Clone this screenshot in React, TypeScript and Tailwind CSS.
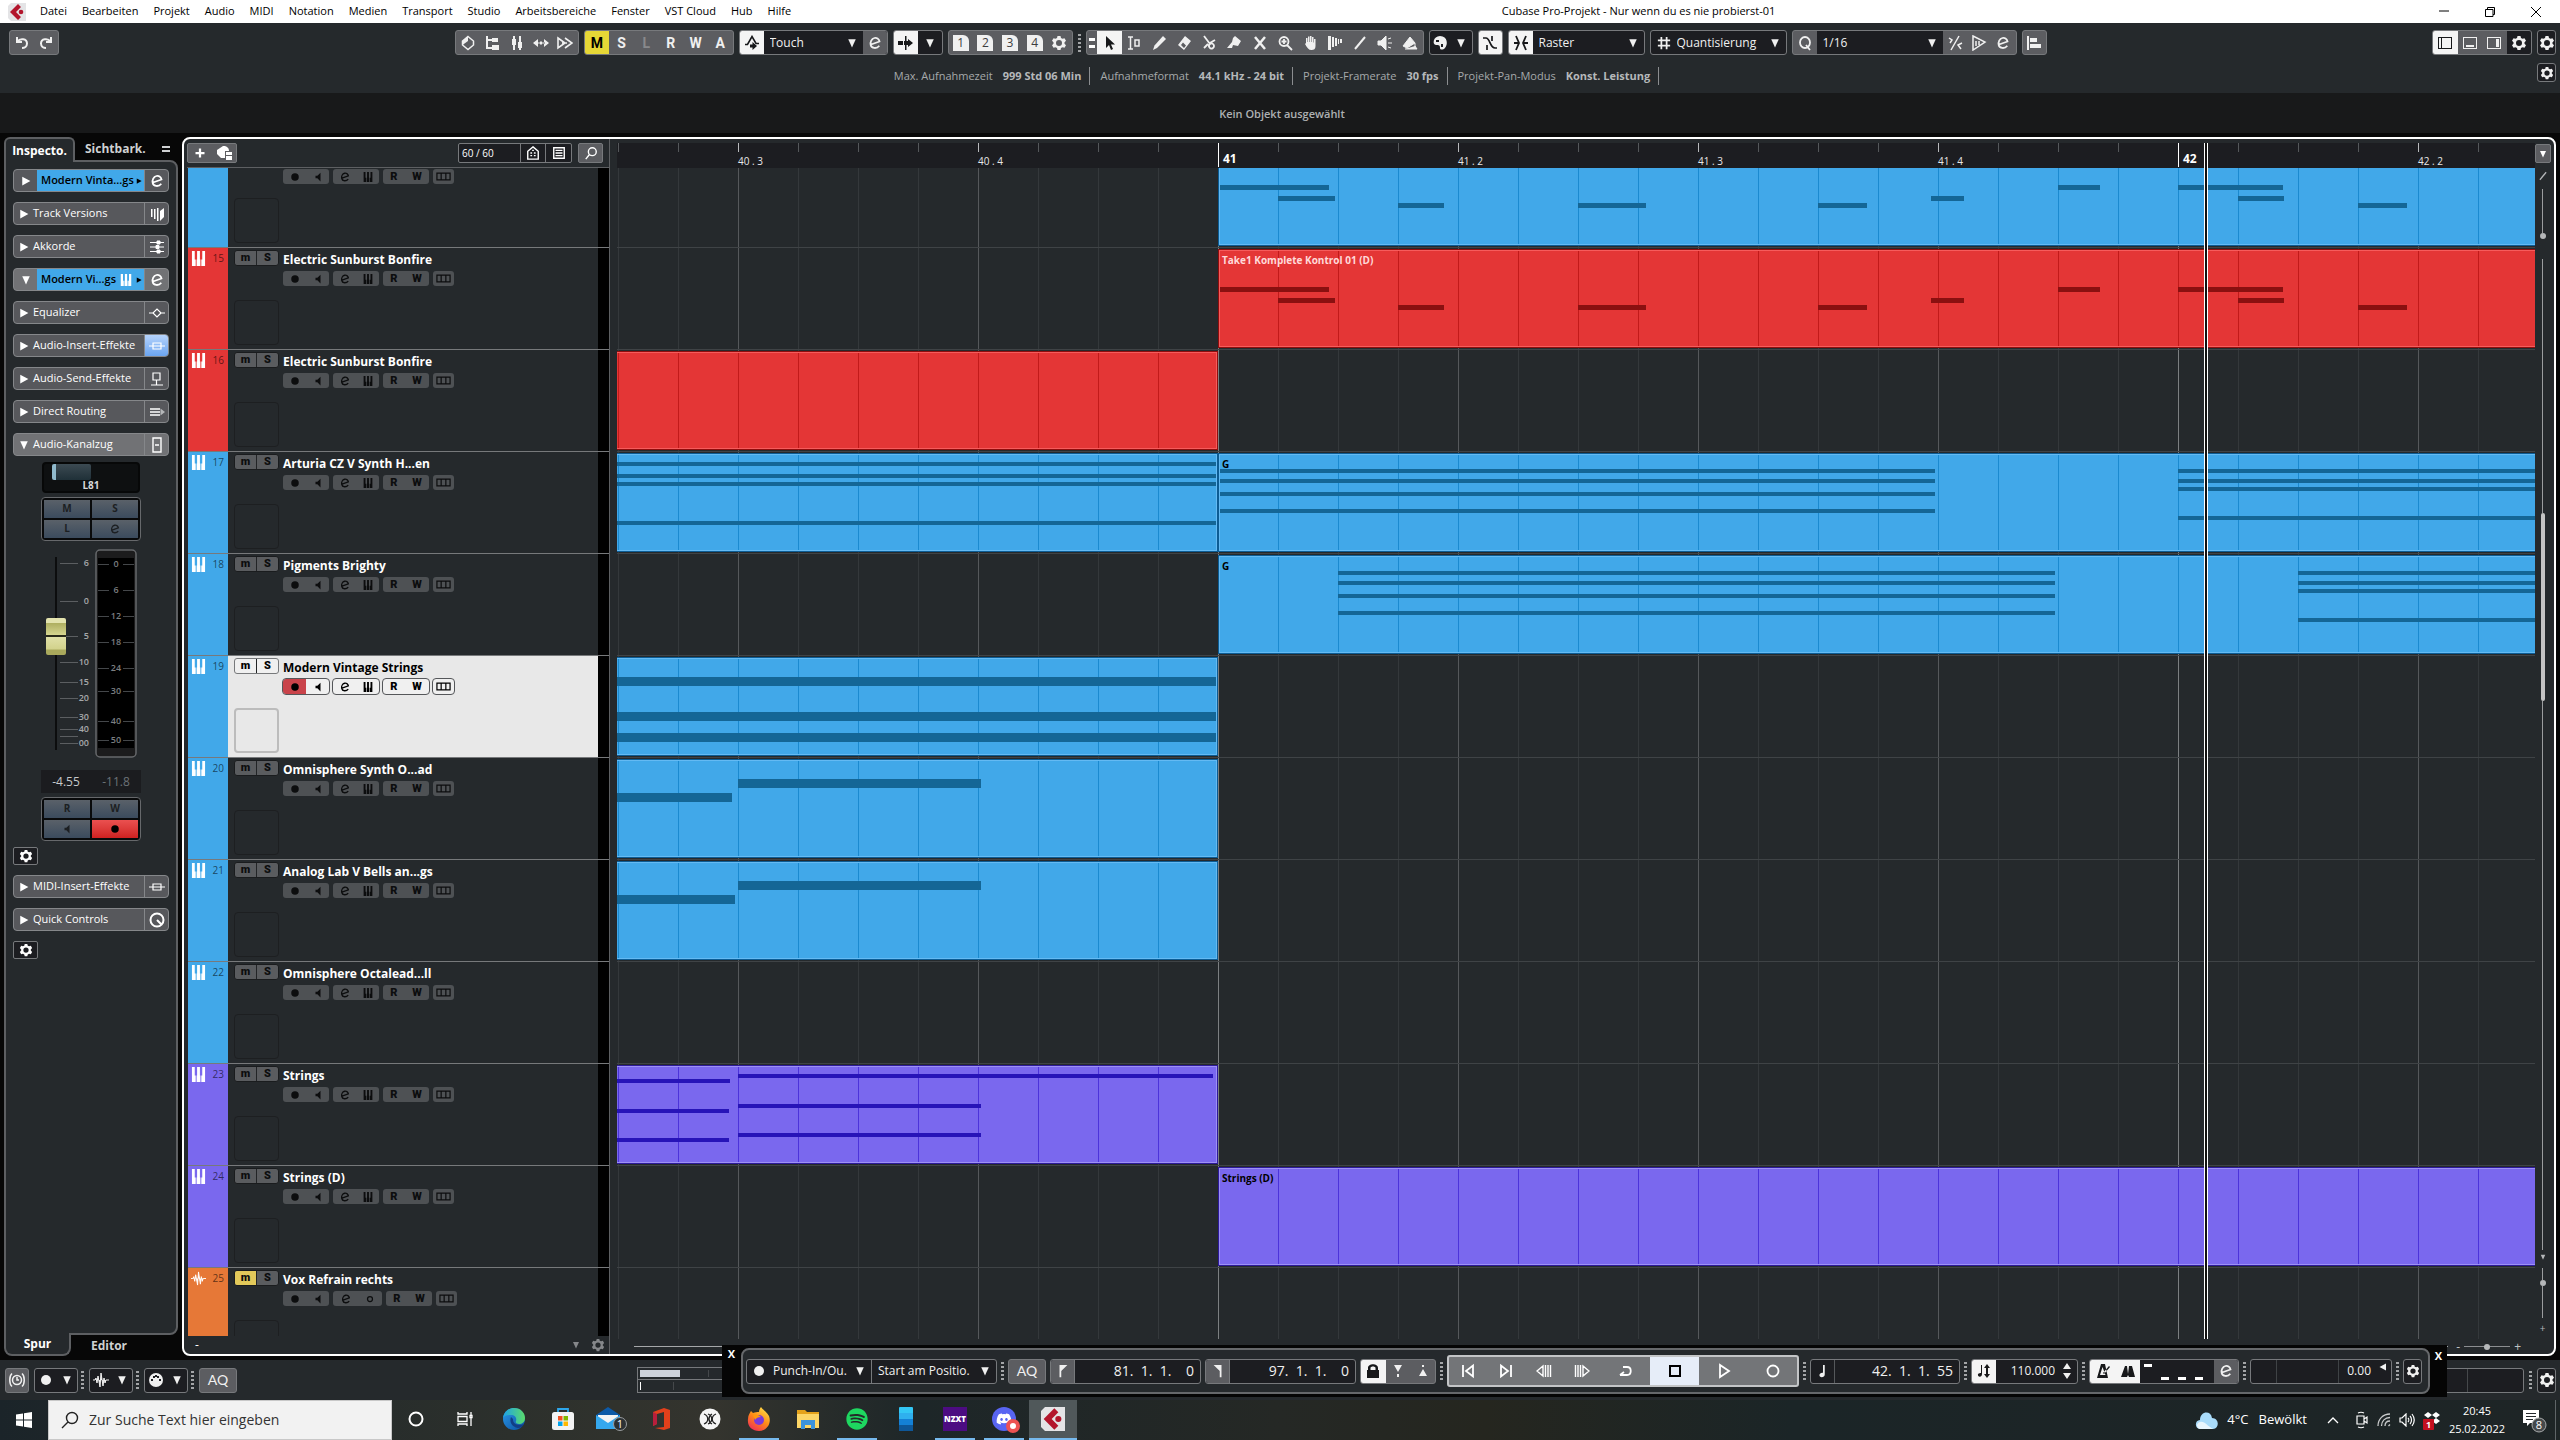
import { useState } from "react";
import type { ReactNode } from "react";
import { FaSpotify, FaDiscord } from "react-icons/fa";
import { clsx } from "clsx";

const icons: Record<string, ReactNode> = {
  undo: <path d="M3 2v5h5M3.500 6.500C6 3 13 3.500 13 8.500c0 3-2.500 4.500-5 4.500" fill="none" stroke="currentColor" strokeWidth="2" />,
  redo: <path d="M13 2v5H8M12.500 6.500C10 3 3 3.500 3 8.500c0 3 2.500 4.500 5 4.500" fill="none" stroke="currentColor" strokeWidth="2" />,
  diamond: (
    <>
      <path d="M8 1.500 13.500 6v4L8 14.500 2.500 10V6Z" fill="none" stroke="currentColor" strokeWidth="1.500" />
      <path d="M8 1.500 2.500 6v4L8 6Z" fill="currentColor" />
    </>
  ),
  tree: <path d="M2 1h2v3h4V3h6v4H8V6H4v6h4v-2h7v5H8v-1H2Z" fill="currentColor" />,
  mixer: <path d="M4 1h2v3h1v6H6v5H4v-5H3V4h1Zm6 0h2v6h1v6h-1v2h-2v-2H9V7h1Z" fill="currentColor" />,
  spread: <path d="M5 4v8L0 8Zm6 0v8l5-4ZM7 6.500h2v3H7ZM4 7.500h8v1H4Z" fill="currentColor" />,
  ff: <path d="M1 3l7 5-7 5ZM8 3l7 5-7 5M10 8H5" fill="none" stroke="currentColor" strokeWidth="1.600" />,
  auto: (
    <>
      <path d="M1 9.500h2.500L8 1.500l4 7h3" fill="none" stroke="currentColor" strokeWidth="1.600" />
      <path d="M6 9.500h2.500V7l4.500 4-4.500 4v-2.500H6Z" fill="currentColor" />
    </>
  ),
  e: <path d="M4 9.500 12.500 6.500C12 3.500 9.500 2.500 7.500 3 4.500 3.700 3 7 3.700 10c.8 3.600 6 4 8.600.8" fill="none" stroke="currentColor" strokeWidth="1.800" />,
  follow: <path d="M7 1h1.500v14H7ZM0 6h5v4H0Zm10 0V4l5 4-5 4v-2H6V6Z" fill="currentColor" />,
  gear: (
    <path
      fillRule="evenodd"
      d="M6.500 1h3l.5 2 1.500.8 2-.6L15 5.800l-1.500 1.500v1.400L15 10.200l-1.500 2.600-2-.6-1.500.8-.5 2h-3l-.5-2-1.500-.8-2 .6L1 10.200l1.500-1.500V7.300L1 5.800l1.500-2.600 2 .6L6 3ZM8 5a3 3 0 100 6 3 3 0 000-6Z"
      fill="currentColor"
    />
  ),
  arrow: <path d="M5 1v12l3-3 2 5 2-1-2-4.500h4Z" fill="currentColor" />,
  range: <path d="M2 2h5M2 14h5M4.500 2v12M9 5h4v6H9Z" stroke="currentColor" strokeWidth="1.500" fill="none" />,
  pen: <path d="M12 1l3 3-9 9-4 2 1.500-4.500Z" fill="currentColor" />,
  eraser: <path fillRule="evenodd" d="M9 1l6 5-7 9-6-5Zm-4 9 3 3 2-2.500-3-3Z" fill="currentColor" />,
  scissors: <path d="M3 1l6 8M14 5 8 8.500M9 9a2.200 2.200 0 103 4 2.200 2.200 0 00-3-4ZM7 9l-4 4" fill="none" stroke="currentColor" strokeWidth="1.800" />,
  glue: <path d="M9 1l6 5-3 5-5-1-1 3H1l5-6 1-4Z" fill="currentColor" />,
  x: <path d="M3 2l10 12M13 2 3 14" stroke="currentColor" strokeWidth="2.500" fill="none" />,
  zoom: <path d="M7 2a4.500 4.500 0 100 9 4.500 4.500 0 000-9ZM10 10l5 5M4.500 6.500h5M7 4v5" fill="none" stroke="currentColor" strokeWidth="1.800" />,
  hand: <path d="M4 3h1.500v4H6V1.500h1.500V7H8V1h1.500v6h.5V2h1.500v5.500h.5V4h1.500v7c0 3-1.500 4-4 4-3 0-4-2-6.500-6l1-1L4 9.500Z" fill="currentColor" />,
  comp: <path d="M1 1h3v14H1ZM5 2h2v10H5ZM8 3h2v8H8Zm3 1h1v5h-1Zm2 0h2v4h-2Z" fill="currentColor" />,
  line: <path d="M3 14 13 2" stroke="currentColor" strokeWidth="2" fill="none" />,
  speaker: <path d="M1 6h3l5-5v14l-5-5H1ZM11 4l3-1M11 8h4M11 12l3 1" fill="currentColor" stroke="currentColor" />,
  bucket: <path d="M1 11 8 2l5 6-8 5Zm12-3v5M3 14h12l-2-3" fill="currentColor" stroke="currentColor" />,
  palette: <path fillRule="evenodd" d="M8 1c8 0 8 9 5 12-2 2-5 2-5 0 0-3-1-3-4-3-4 0-3-9 4-9ZM4 5v2h3V5Zm5 4v3h2V9Z" fill="currentColor" />,
  curve: <path d="M1 3h3c4 0 4 10 9 10h2M10 1v5M5 10v5" fill="none" stroke="currentColor" strokeWidth="1.700" />,
  snap: <path d="M3 1l3 7-3 7M13 1l-3 7 3 7M1 8h5M10 8h5" fill="none" stroke="currentColor" strokeWidth="1.800" />,
  hash: <path d="M5 1v14M11 1v14M1 5h14M1 11h14" fill="none" stroke="currentColor" strokeWidth="2" />,
  q: <path d="M8 2a5 5.500 0 100 11A5 5.500 0 008 2ZM9 10l4 5" fill="none" stroke="currentColor" strokeWidth="1.800" />,
  percent: <path d="M12 1 4 15M2 3l3 2-2 3M15 8l-4 2 3 4" fill="none" stroke="currentColor" strokeWidth="1.500" />,
  flag: <path d="M2 1l12 6-12 8Z M5 6v5M8 6v4" fill="none" stroke="currentColor" strokeWidth="1.500" />,
  align: <path d="M1 1h2v14H1ZM4 3h7v4H4Zm0 6h11v4H4Z" fill="currentColor" />,
  zoneL: <path fillRule="evenodd" d="M1 2h14v12H1Zm1 1v10h2V3Zm3 0v10h9V3Z" fill="currentColor" />,
  zoneB: <path fillRule="evenodd" d="M1 2h14v12H1Zm1 1v10h12V3Zm2 7h8v2H4Z" fill="currentColor" />,
  zoneR: <path fillRule="evenodd" d="M1 2h14v12H1Zm1 1v10h12V3Zm8 1h3v8h-3Z" fill="currentColor" />,
  versions: <path d="M2 3h1.500v8H2Zm3 0h1.500v10H5Zm3-1h1.500v13H8Zm3 3 4-3v9l-4 4Z" fill="currentColor" />,
  chords: <path d="M1 3.500h14M1 8h14M1 12.500h14M8 2h3v3H8ZM7 6.500h3v3H7Zm1 4.500h3v3H8Z" fill="currentColor" stroke="currentColor" />,
  eq: <path d="M0 8h4l4-4 4 4h4M4 8l4 4 4-4" fill="none" stroke="currentColor" strokeWidth="1.200" />,
  insert: <path d="M0 8h16M4 5h8v6H4Z" fill="none" stroke="currentColor" strokeWidth="1.200" />,
  send: <path d="M4 2h7v7H4ZM7.500 9v5M2 14h12" fill="none" stroke="currentColor" strokeWidth="1.200" />,
  routing: (
    <>
      <path d="M1 5h10M1 8h10M1 11h10" fill="none" stroke="currentColor" strokeWidth="1.400" />
      <path d="M11.500 4.500 16 8l-4.500 3.500Z" fill="#b5b7b9" />
    </>
  ),
  strip: <path d="M4 1h8v14H4ZM6 8h4" fill="none" stroke="currentColor" strokeWidth="1.400" />,
  knob: <path d="M8 1.500a6.500 6.500 0 100 13 6.500 6.500 0 000-13ZM8 8l4 4" fill="none" stroke="currentColor" strokeWidth="2" />,
  keys: <path fillRule="evenodd" d="M1 0h14v16H1ZM4 0v9h2.500V0Zm5.500 0v9H12V0ZM5 9v7h1V9Zm5 0v7h1V9Z" fill="currentColor" />,
  wave: <path d="M0 8h2l1-2 1 5 1-7 2 11 1-14 2 13 1-8 1 5 1-3h3" fill="currentColor" stroke="currentColor" />,
  dot: <circle cx="8" cy="8" r="5" fill="currentColor" />,
  ring: <circle cx="8" cy="8" r="4" fill="none" stroke="currentColor" strokeWidth="2" />,
  mon: <path d="M4 6h3l5-5v14L7 10H4Z" fill="currentColor" />,
  lanes: <path d="M1 4.500h14v7H1ZM5.500 4.500v7M10.500 4.500v7" fill="none" stroke="currentColor" strokeWidth="1.300" />,
  plus: <path d="M8 2v12M2 8h12" stroke="currentColor" strokeWidth="3" fill="none" />,
  preset: <path d="M7 1c4 0 6 2 6 5H9v7H5L1 9V5ZM10 7h6v3h-6Zm0 4h6v4h-6Z" fill="currentColor" />,
  agents: <path d="M8 1l6 5v9H2V6ZM5 8h2M9 8h2M5 11h2M9 11h2M7 5h2" fill="none" stroke="currentColor" strokeWidth="1.600" />,
  list: <path d="M2 2h12v12H2ZM4 5h8M4 8h8M4 11h8" fill="none" stroke="currentColor" strokeWidth="1.600" />,
  find: <path d="M9.500 2a4.500 4.500 0 100 9 4.500 4.500 0 000-9ZM6 10l-4 5" fill="none" stroke="currentColor" strokeWidth="1.600" />,
  lock: <path fillRule="evenodd" d="M3 7V5c0-5 10-5 10 0v2h1v8H2V7Zm2.500 0h5V5c0-2-5-2-5 0Z" fill="currentColor" />,
  punchIn: <path d="M4 2h8L8 9ZM7 11h2v3H7Z" fill="currentColor" />,
  punchOut: <path d="M4 13h8L8 6ZM7 2h2v2H7Z" fill="currentColor" />,
  locL: <path d="M4 1h9L6 8v7H4Z" fill="currentColor" />,
  locR: <path d="M12 1H3l7 7v7h2Z" fill="currentColor" />,
  toStart: <path d="M3 2v12M13 2.500v11L6 8Z" fill="none" stroke="currentColor" strokeWidth="1.800" />,
  toEnd: <path d="M13 2v12M3 2.500v11L10 8Z" fill="none" stroke="currentColor" strokeWidth="1.800" />,
  rewind: <path d="M7 3v10L1 8ZM9.500 2v12M12 2v12M14.500 2v12" fill="none" stroke="currentColor" strokeWidth="1.400" />,
  forward: <path d="M9 3v10l6-5ZM6.500 2v12M4 2v12M1.500 2v12" fill="none" stroke="currentColor" strokeWidth="1.400" />,
  cycle: <path d="M5 4h4c5 0 5 8 0 8H2M6 9l-4 3" fill="none" stroke="currentColor" strokeWidth="1.800" />,
  stop: <path d="M3 3h10v10H3Z" fill="none" stroke="currentColor" strokeWidth="2" />,
  play: <path d="M4 2v12l9-6Z" fill="none" stroke="currentColor" strokeWidth="1.800" />,
  rec: <circle cx="8" cy="8" r="5.500" fill="none" stroke="currentColor" strokeWidth="1.800" />,
  note: <path d="M8 1h2v11c0 4-7 4-6 0 1-2 3-2 4-2Z" fill="currentColor" />,
  tempo: <path d="M5 2h1v9c0 4-5 3-4 0 1-1 2-1 3-1ZM11 1l3 4h-2v6h2l-3 4-3-4h2V5H8Z" fill="currentColor" />,
  metro: <path fillRule="evenodd" d="M6 1h4l3 14H2Zm1.500 3L5 12h5.500ZM8 10l6-7 1 1-6 7Z" fill="currentColor" />,
  precount: <path d="M1 14 5 3h2l1 8 1-8h3l3 11H9L8 12l-1 2Z" fill="currentColor" />,
  clock: <path d="M8 3.500a4.500 4.500 0 100 9 4.500 4.500 0 000-9ZM8 5v3h2M3 1.500C0 4 0 12 3 14.500M13 1.500c3 2.500 3 10.500 0 13" fill="none" stroke="currentColor" strokeWidth="1.500" />,
  midi: (
    <>
      <circle cx="8" cy="8" r="7" fill="currentColor" />
      <path d="M3 7h2v2H3Zm2-3h2v2H5Zm4 0h2v2H9Zm2 3h2v2h-2Zm-4-4h2v2H7Z" fill="#1d1e22" />
    </>
  ),
  down: <path d="M2 2h12L8 15Z" fill="currentColor" />,
  right: <path d="M2 1v14l13-7Z" fill="currentColor" />,
};

function Icon({ name, className = "size-4" }: { name: string; className?: string }) {
  return (
    <svg viewBox="0 0 16 16" className={clsx("shrink-0", className)} aria-hidden="true">
      {icons[name]}
    </svg>
  );
}

const Down = () => <Icon name="down" className="size-2.5" />;

const Grip = () => (
  <div className="flex w-[3px] shrink-0 flex-col gap-[2px]">
    {[0, 1, 2, 3, 4].map((i) => (
      <i key={i} className="h-[2px] bg-[#a3a5a7]" />
    ))}
  </div>
);

const box = "flex h-[25px] shrink-0 overflow-hidden rounded-[3px] border border-[#77797c]";
const grey = "bg-[#5c5d61] text-[#f0f0f0]";
const dark = "bg-[#1c1d21] text-[#f0f0f0]";
const lit = "bg-[#f4f4f4] text-[#17181a]";
const cell = "flex flex-1 items-center justify-center";

function Tool({ name, on, label }: { name: string; on?: boolean; label?: string }) {
  return (
    <button aria-label={label ?? name} className={clsx(cell, on && lit)}>
      <Icon name={name} />
    </button>
  );
}

function Drop({ label, value }: { label: string; value: string }) {
  return (
    <label className="flex min-w-0 flex-1 items-center px-1.5">
      <select aria-label={label} className="min-w-0 flex-1 appearance-none bg-transparent text-xs outline-none">
        <option>{value}</option>
      </select>
      <Down />
    </label>
  );
}

const menus = ["Datei", "Bearbeiten", "Projekt", "Audio", "MIDI", "Notation", "Medien", "Transport", "Studio", "Arbeitsbereiche", "Fenster", "VST Cloud", "Hub", "Hilfe"];

function CubaseMark({ className }: { className: string }) {
  return (
    <svg viewBox="0 0 18 18" className={className} aria-hidden="true">
      <path d="M0 3 3 0h15v18H3L0 15Z" fill="#e4e4e6" />
      <path d="M10 1 2 9l8 8 3-3-5-5 5-5Z" fill="#b3152c" />
      <circle cx="13" cy="9" r="2.300" fill="#b3152c" />
    </svg>
  );
}

function MenuBar() {
  return (
    <header className="flex h-[23px] shrink-0 items-center bg-white text-[11px] text-black">
      <CubaseMark className="ml-2 mr-3.5 size-[18px]" />
      <nav className="flex gap-[15px]">
        {menus.map((m) => (
          <button key={m}>{m}</button>
        ))}
      </nav>
      <h1 className="flex-1 pl-12 text-center">Cubase Pro-Projekt - Nur wenn du es nie probierst-01</h1>
      <div className="flex justify-end gap-[34px] pr-[18px]">
        <button aria-label="Minimieren">
          <svg viewBox="0 0 12 12" className="size-3"><path d="M1 5h10" stroke="#000" /></svg>
        </button>
        <button aria-label="Wiederherstellen">
          <svg viewBox="0 0 12 12" className="size-3"><path d="M3.500 3V1.500h7v7H9M1.500 3.500H9v7H1.500Z" fill="none" stroke="#000" /></svg>
        </button>
        <button aria-label="Schließen">
          <svg viewBox="0 0 12 12" className="size-3"><path d="M1 1l10 10M11 1 1 11" stroke="#000" /></svg>
        </button>
      </div>
    </header>
  );
}

const status = [
  ["Max. Aufnahmezeit", "999 Std 06 Min"],
  ["Aufnahmeformat", "44.1 kHz - 24 bit"],
  ["Projekt-Framerate", "30 fps"],
  ["Projekt-Pan-Modus", "Konst. Leistung"],
];

function Toolbar() {
  return (
    <div className="h-[70px] shrink-0 bg-[#25292c] pt-[7px]">
      <div className="flex items-center gap-[5px] pl-[9px] pr-1">
        <div className={clsx(box, grey, "mr-2.5 w-[50px]")}>
          <Tool name="undo" />
          <Tool name="redo" />
        </div>
        <div className={clsx(box, grey, "ml-auto w-[124px]")}>
          {["diamond", "tree", "mixer", "spread", "ff"].map((n) => (
            <Tool key={n} name={n} />
          ))}
        </div>
        <div className={clsx(box, grey, "w-[150px] font-[Roboto] text-sm font-bold")}>
          {["M", "S", "L", "R", "W", "A"].map((c) => (
            <button key={c} className={clsx(cell, c === "M" && "bg-[#e6d736] text-black", c === "L" && "text-[#88898c]")}>
              {c}
            </button>
          ))}
        </div>
        <div className={clsx(box, dark, "w-[149px]")}>
          <button aria-label="Automation" className={clsx("grid w-6 place-items-center", lit)}>
            <Icon name="auto" />
          </button>
          <Drop label="Automationsmodus" value="Touch" />
          <button aria-label="Automationsfeld" className={clsx("grid w-6 place-items-center", grey)}>
            <Icon name="e" />
          </button>
        </div>
        <div className={clsx(box, dark, "w-[50px]")}>
          <Tool name="follow" on />
          <button aria-label="Auto-Scroll" className={cell}><Down /></button>
        </div>
        <div className={clsx(box, grey, "w-[125px]")}>
          {["1", "2", "3", "4"].map((n) => (
            <button key={n} className={cell}>
              <span className="w-4 rounded-tr-md bg-[#f0f0f0] text-center text-xs leading-4 text-[#3c3d40]">{n}</span>
            </button>
          ))}
          <Tool name="gear" />
        </div>
        <Grip />
        <div className={clsx(box, grey, "w-[338px]")}>
          <div className="flex w-2.5 flex-col justify-center gap-1 px-0.5">
            <i className="h-[3px] bg-white" />
            <i className="h-[3px] bg-white" />
          </div>
          {["arrow", "range", "pen", "eraser", "scissors", "glue", "x", "zoom", "hand", "comp", "line", "speaker", "bucket"].map((n, i) => (
            <Tool key={n} name={n} on={i === 0} />
          ))}
        </div>
        <div className={clsx(box, dark, "w-[44px]")}>
          <Tool name="palette" />
          <button aria-label="Farben" className={cell}><Down /></button>
        </div>
        <div className={clsx(box, dark, "w-[25px]")}><Tool name="curve" on /></div>
        <div className={clsx(box, dark, "w-[137px]")}>
          <button aria-label="Raster an" className={clsx("grid w-6 place-items-center", lit)}>
            <Icon name="snap" />
          </button>
          <Drop label="Rastermodus" value="Raster" />
        </div>
        <div className={clsx(box, dark, "w-[137px] items-center pl-1.5")}>
          <Icon name="hash" className="size-3.5" />
          <Drop label="Rastertyp" value="Quantisierung" />
        </div>
        <div className={clsx(box, grey, "w-[225px]")}>
          <button aria-label="Quantisieren" className="grid w-6 place-items-center"><Icon name="q" /></button>
          <div className={clsx("flex w-[126px]", dark)}><Drop label="Quantisierungswert" value="1/16" /></div>
          <Tool name="percent" />
          <Tool name="flag" />
          <Tool name="e" />
        </div>
        <div className={clsx(box, grey, "mr-auto w-[25px]")}><Tool name="align" /></div>
        <div className={clsx(box, grey, "w-[100px]")}>
          <Tool name="zoneL" on />
          <Tool name="zoneB" />
          <Tool name="zoneR" />
          <button aria-label="Fenster-Layout" className={clsx(cell, dark)}><Icon name="gear" /></button>
        </div>
        <div className={clsx(box, dark, "w-[19px]")}><Tool name="gear" /></div>
      </div>
      <div className="flex items-start pr-1 pt-2">
        <dl className="flex flex-1 justify-center pt-1 pl-4 text-[11px] text-[#a6a9ab]">
          {status.map(([k, v]) => (
            <div key={k} className="mr-[10px] flex items-center gap-[10px] border-r border-[#8b8d90] pr-2 leading-[18px] last:mr-0">
              <dt>{k}</dt>
              <dd className="font-bold text-[#b5b8ba]">{v}</dd>
            </div>
          ))}
        </dl>
        <button aria-label="Statuszeile einrichten" className={clsx("grid h-[19px] w-[19px] place-items-center rounded-[3px] border border-[#77797c]", dark)}>
          <Icon name="gear" className="size-3.5" />
        </button>
      </div>
    </div>
  );
}

type Section = { name: string; icon: string; open?: boolean; blue?: boolean; midi?: boolean; lit?: boolean };

const sections: Section[] = [
  { name: "Modern Vinta...gs", icon: "e", blue: true },
  { name: "Track Versions", icon: "versions" },
  { name: "Akkorde", icon: "chords" },
  { name: "Modern Vi...gs", icon: "e", blue: true, open: true, midi: true },
  { name: "Equalizer", icon: "eq" },
  { name: "Audio-Insert-Effekte", icon: "insert", lit: true },
  { name: "Audio-Send-Effekte", icon: "send" },
  { name: "Direct Routing", icon: "routing" },
  { name: "Audio-Kanalzug", icon: "strip", open: true },
];

function SectionRow({ s }: { s: Section }) {
  return (
    <div className={clsx("flex h-[23px] shrink-0 overflow-hidden rounded border border-[#85878a] text-white", s.open ? "bg-[#717275]" : "bg-[#57585c]")}>
      <button className="flex min-w-0 flex-1 items-center">
        <span className={clsx("grid shrink-0 place-items-center", s.blue ? "w-[23px]" : "w-[19px]")}>
          <Icon name={s.open ? "down" : "right"} className="size-2.5" />
        </span>
        {s.blue ? (
          <span className="flex h-full flex-1 items-center bg-[#41a8e9] pl-1 text-[11px] font-semibold whitespace-nowrap text-black">
            {s.name}
            {s.midi && <Icon name="keys" className="ml-1 size-3 text-white" />}
            <Icon name="right" className="ml-auto mr-0.5 size-1.5" />
          </span>
        ) : (
          <span className="text-[11px] whitespace-nowrap">{s.name}</span>
        )}
      </button>
      <button aria-label={`${s.name} Optionen`} className={clsx("grid w-6 shrink-0 place-items-center border-l border-[#85878a]", s.lit && "bg-linear-to-b from-[#b5d3fb] to-[#6aa4f0]")}>
        <Icon name={s.icon} />
      </button>
    </div>
  );
}

const faderMarks: [string, number][] = [["6", 14], ["0", 52], ["5", 87], ["10", 113], ["15", 133], ["20", 149], ["30", 168], ["40", 180], ["", 187], ["00", 194]];
const meterMarks: [string, number][] = [["0", 15], ["6", 41], ["12", 67], ["18", 93], ["24", 119], ["30", 142], ["40", 172], ["50", 191]];

const padBtn = "grid h-[18px] place-items-center bg-linear-to-b from-[#5a6169] to-[#3b4b5d] text-[10px] font-bold text-[#1c1f22]";
const gearBtn = "grid h-[18px] w-[25px] shrink-0 place-items-center rounded-[2px] border border-[#77797c] bg-[#1c1d21] text-white";

function Channel() {
  return (
    <div className="-mt-1 flex w-[100px] shrink-0 flex-col self-center">
      <div className="mx-px flex h-[31px] flex-col items-center rounded border-2 border-[#070808] bg-[#0e1011]">
        <div className="mr-[39px] h-4 w-[39px] rounded-[2px] border-l-4 border-[#8fb9cc] bg-linear-to-b from-[#3c4a52] to-[#1f3038]" />
        <span className="text-[10px] leading-[11px] font-bold text-[#d8d8d8]">L81</span>
      </div>
      <div className="mt-1 grid grid-cols-2 gap-[2px] rounded border border-[#66686b] bg-[#090a0b] p-[2px]">
        <button className={padBtn}>M</button>
        <button className={padBtn}>S</button>
        <button className={padBtn}>L</button>
        <button aria-label="Kanal bearbeiten" className={padBtn}><Icon name="e" className="size-3" /></button>
      </div>
      <div className="mt-2 flex h-[209px]">
        <input
          type="range"
          aria-label="Lautstärke"
          defaultValue={61}
          className="mt-2 ml-[5px] h-[193px] w-5 appearance-none bg-[linear-gradient(90deg,transparent_9px,#0c0d0e_9px_11px,transparent_11px)] [direction:rtl] [writing-mode:vertical-lr] [&::-webkit-slider-thumb]:h-[37px] [&::-webkit-slider-thumb]:w-5 [&::-webkit-slider-thumb]:appearance-none [&::-webkit-slider-thumb]:rounded-[2px] [&::-webkit-slider-thumb]:bg-[linear-gradient(#e3e3ae_0_5px,#aeae60_5px,#d6d690_17px,#2a2a1a_17px_19px,#e0e0a8_19px,#d2d28c_31px,#a9a95c_32px)]"
        />
        <svg viewBox="0 0 29 209" className="h-[209px] w-[29px] overflow-visible" role="img" aria-label="Fader-Skala">
          {faderMarks.map(([t, y]) => (
            <g key={y}>
              <path d={`M${t === "5" ? 0 : -6} ${y}.500H12`} stroke="#5b5e61" />
              <text x="23" y={y + 3} textAnchor="end" fontSize="9" fontWeight="600" fill="#a5a8aa">{t}</text>
            </g>
          ))}
        </svg>
        <svg viewBox="0 0 42 209" className="h-[209px] w-[42px]" role="img" aria-label="Pegelanzeige">
          <rect x="1" y="1" width="40" height="207" rx="4" fill="#1c1c1d" stroke="#66686b" strokeWidth="1.500" />
          <rect x="3" y="9" width="36" height="190" fill="#000" />
          {meterMarks.map(([t, y]) => (
            <g key={y}>
              <path d={`M3 ${y}.500H14M28 ${y}.500H39`} stroke="#44474a" />
              <text x="21" y={y + 3} textAnchor="middle" fontSize="9" fontWeight="600" fill="#7b7e80">{t}</text>
            </g>
          ))}
        </svg>
      </div>
      <div className="mt-3 flex h-[23px] items-center justify-around bg-[#1b1c1f] text-xs">
        <span className="text-[#c6c9cb]">-4.55</span>
        <span className="text-[#6b7277]">-11.8</span>
      </div>
      <div className="mt-1 grid grid-cols-2 gap-[2px] rounded border border-[#66686b] bg-[#090a0b] p-[2px]">
        <button className={padBtn}>R</button>
        <button className={padBtn}>W</button>
        <button aria-label="Monitor" className={padBtn}><Icon name="mon" className="size-2.5" /></button>
        <button aria-label="Aufnahme" className="grid h-[18px] place-items-center bg-linear-to-b from-[#ea5050] to-[#cf2020] text-black">
          <Icon name="dot" className="size-3" />
        </button>
      </div>
    </div>
  );
}

function Inspector() {
  const [tab, setTab] = useState("Spur");
  return (
    <aside className="flex w-[174px] shrink-0 flex-col text-xs font-bold text-[#cfd1d2]">
      <div className="flex h-[23px] shrink-0 items-center">
        <button className="relative z-10 -mb-0.5 h-[25px] w-[71px] rounded-t-md border-2 border-b-0 border-[#5d5f62] bg-[#25292c] font-bold text-white">Inspecto.</button>
        <button className="ml-2.5 font-bold">Sichtbark.</button>
        <button aria-label="Inspector-Menü" className="ml-auto mr-2 flex w-2 flex-col gap-[2px]">
          <i className="h-[2px] bg-[#cfd1d2]" />
          <i className="h-[2px] bg-[#cfd1d2]" />
        </button>
      </div>
      <div className="flex flex-1 flex-col gap-[10px] rounded-r-lg border-2 border-[#5d5f62] bg-[#25292c] px-[7px] pt-[7px] font-normal">
        {sections.map((s) => (
          <SectionRow key={s.name} s={s} />
        ))}
        <Channel />
        <button aria-label="Kanal einrichten" className={clsx(gearBtn, "-mt-1")}><Icon name="gear" className="size-3.5" /></button>
        <SectionRow s={{ name: "MIDI-Insert-Effekte", icon: "insert" }} />
        <SectionRow s={{ name: "Quick Controls", icon: "knob" }} />
        <button aria-label="Inspector einrichten" className={gearBtn}><Icon name="gear" className="size-3.5" /></button>
      </div>
      <div className="flex h-[21px] shrink-0">
        {["Spur", "Editor"].map((t) => (
          <button
            key={t}
            onClick={() => setTab(t)}
            className={clsx("font-bold", tab === t ? "relative z-10 -mt-0.5 h-[23px] w-[67px] rounded-b-lg border-2 border-t-0 border-[#5d5f62] bg-[#25292c] text-white" : "px-5")}
          >
            {t}
          </button>
        ))}
      </div>
    </aside>
  );
}

type Note = [x: number, w: number, y: number];
type Clip = { x: number; w?: number; label?: string; h?: number; notes?: Note[] };
type Track = { no: number; name: string; tone: "blue" | "red" | "violet" | "orange"; selected?: boolean; audio?: boolean; clips: Clip[] };

const tones = {
  blue: { strip: "bg-[#41a8e9]", clip: "border-[#0c5c94] bg-[#41a8e9] text-black", edge: "border-[#64baf3]", grid: "bg-[#1b8ad0]", note: "bg-[#146696]" },
  red: { strip: "bg-[#e43636]", clip: "border-[#8f0d0d] bg-[#e43636] text-[#ffd9d9]", edge: "border-[#f65c5c]", grid: "bg-[#c21a1a]", note: "bg-[#8a1010]" },
  violet: { strip: "bg-[#7a68ee]", clip: "border-[#2d1a9a] bg-[#7a68ee] text-black", edge: "border-[#9d90f5]", grid: "bg-[#4c33da]", note: "bg-[#2714b8]" },
  orange: { strip: "bg-[#e67837]", clip: "", edge: "", grid: "", note: "" },
};

const BAR = 601; // bar 41, measured from the left edge of the visible range
const END = 2400;

const lead: Note[] = [[603, 109, 38], [661, 57, 49], [781, 46, 56], [961, 68, 56], [1201, 49, 56], [1314, 33, 49], [1441, 42, 38], [1561, 105, 38], [1621, 46, 49], [1741, 49, 56]];
const rows = (x: number, w: number, ys: number[]): Note[] => ys.map((y) => [x, w, y]);

const tracks: Track[] = [
  { no: 14, name: "", tone: "blue", clips: [{ x: BAR, h: 5, notes: lead }] },
  { no: 15, name: "Electric Sunburst Bonfire", tone: "red", clips: [{ x: BAR, h: 5, label: "Take1 Komplete Kontrol 01 (D)", notes: lead }] },
  { no: 16, name: "Electric Sunburst Bonfire", tone: "red", clips: [{ x: -2, w: 603 }] },
  {
    no: 17, name: "Arturia CZ V Synth H...en", tone: "blue",
    clips: [
      { x: -2, w: 603, notes: rows(0, 599, [9, 21, 29, 68]) },
      { x: BAR, label: "G", notes: [...rows(603, 715, [16, 26, 39, 56]), ...rows(1561, END, [16, 26, 34, 63])] },
    ],
  },
  { no: 18, name: "Pigments Brighty", tone: "blue", clips: [{ x: BAR, label: "G", notes: [...rows(721, 717, [16, 26, 39, 56]), ...rows(1681, END, [16, 26, 34, 63])] }] },
  { no: 19, name: "Modern Vintage Strings", tone: "blue", selected: true, clips: [{ x: -2, w: 603, h: 9, notes: rows(0, 599, [20, 55, 76]) }] },
  { no: 20, name: "Omnisphere Synth O...ad", tone: "blue", clips: [{ x: -2, w: 603, h: 9, notes: [[0, 115, 34], [121, 243, 20]] }] },
  { no: 21, name: "Analog Lab V Bells an...gs", tone: "blue", clips: [{ x: -2, w: 603, h: 9, notes: [[0, 118, 34], [121, 243, 20]] }] },
  { no: 22, name: "Omnisphere Octalead...ll", tone: "blue", clips: [] },
  { no: 23, name: "Strings", tone: "violet", clips: [{ x: -2, w: 603, notes: [[0, 113, 14], [0, 112, 44], [0, 112, 73], [121, 475, 9], [121, 243, 39], [121, 243, 68]] }] },
  { no: 24, name: "Strings (D)", tone: "violet", clips: [{ x: BAR, label: "Strings (D)" }] },
  { no: 25, name: "Vox Refrain rechts", tone: "orange", audio: true, clips: [] },
];

const lines = Array.from({ length: 42 }, (_, k) => ({ x: 1 + 60 * k, beat: k % 4 === 2, bar: k % 16 === 10 }));

function TrackHead({ t, cut }: { t: Track; cut?: boolean }) {
  const pill = clsx(
    "flex h-[15px] items-center justify-around overflow-hidden rounded-[3px]",
    t.selected ? "bg-[#f0f0f0] text-black outline outline-[#55575a]" : "bg-[#4e5154] text-[#0c0d0e]"
  );
  return (
    <div className={clsx("flex h-[102px] w-full shrink-0 border-b border-[#77797b]", t.selected && "bg-[#e8e8e8]")}>
      <div className={clsx("flex w-10 justify-between pt-[3px] pr-1 pl-[3px]", tones[t.tone].strip)}>
        {!cut && (
          <>
            <Icon name={t.audio ? "wave" : "keys"} className="size-[15px] text-white" />
            <span className="text-[10px] leading-[15px] text-black/60">{t.no}</span>
          </>
        )}
      </div>
      <div className="ml-1.5 flex w-[45px] flex-col justify-between pt-[2px] pb-1">
        {cut ? (
          <i className="h-4" />
        ) : (
          <div className={clsx("flex h-4 divide-x divide-[#222426] overflow-hidden rounded-[3px] border font-[Roboto] text-[11px] leading-[14px] font-black", t.selected ? "border-[#77797b] bg-[#f0f0f0] text-black" : "border-[#1a1c1e] bg-[#5a5c5f] text-[#0c0d0e]")}>
            <button className={clsx("flex-1", t.audio && "bg-[#e3c95a]")}>m</button>
            <button className="flex-1">S</button>
          </div>
        )}
        <div className={clsx("h-[45px] rounded border", t.selected ? "border-2 border-[#bcbcbc]" : "border-[#1d1f21]")} />
      </div>
      <div className="ml-1 flex-1 pt-[2px]">
        <div className={clsx("h-[21px] text-xs leading-5 font-bold", t.selected ? "text-black" : "text-white")}>{t.name}</div>
        <div className="flex gap-1">
          <div className={clsx(pill, "w-[46px]")}>
            <button aria-label="Aufnahme" className={clsx("grid h-full flex-1 place-items-center", t.selected && "bg-[#c9434a]")}><Icon name="dot" className="size-3" /></button>
            <button aria-label="Monitor" className="grid flex-1 place-items-center"><Icon name="mon" className="size-2.5" /></button>
          </div>
          <div className={clsx(pill, t.audio ? "w-[49px]" : "w-[46px]")}>
            <button aria-label="Kanal bearbeiten"><Icon name="e" className="size-3" /></button>
            <button aria-label="Instrument"><Icon name={t.audio ? "ring" : "keys"} className="size-2.5" /></button>
          </div>
          <div className={clsx(pill, "w-[46px] font-[Roboto] text-[11px] leading-[15px] font-black")}>
            <button>R</button>
            <button>W</button>
          </div>
          <div className={clsx(pill, "w-[21px]")}>
            <button aria-label="Lanes"><Icon name="lanes" className="size-[15px]" /></button>
          </div>
        </div>
      </div>
      <div className="w-[11px] bg-black" />
    </div>
  );
}

function ClipBox({ clip, tone }: { clip: Clip; tone: Track["tone"] }) {
  const c = tones[tone];
  return (
    <div className={clsx("absolute top-px bottom-px overflow-hidden border", c.clip)} style={clip.w ? { left: clip.x, width: clip.w } : { left: clip.x, right: -3 }}>
      <div className={clsx("absolute inset-0 border", c.edge)} />
      {lines.filter((l) => l.x > clip.x + 2).map((l) => (
        <i key={l.x} className={clsx("absolute inset-y-px w-px", c.grid)} style={{ left: l.x - clip.x - 1 }} />
      ))}
      {clip.notes?.map(([x, w, y]) => (
        <i key={`${x}-${y}`} className={clsx("absolute", c.note)} style={{ left: x - clip.x - 1, top: y - 1, width: w, height: clip.h ?? 4 }} />
      ))}
      {clip.label && <span className="absolute top-0.5 left-[3px] text-[10px] leading-4 font-bold">{clip.label}</span>}
    </div>
  );
}

function Timeline() {
  return (
    <section className="relative ml-[7px] flex min-w-0 flex-1 flex-col overflow-hidden" aria-label="Arrangement">
      <div className="relative mt-1 h-[25px] shrink-0 bg-[#1c1d21]">
        {lines.map((l, k) => (
          <div key={l.x} className={clsx("absolute top-0 border-l", l.bar ? "h-6 border-white" : l.beat ? "h-[9px] border-[#b8babc]" : "h-[9px] border-[#55585b]")} style={{ left: l.x }}>
            {l.bar && <b className="absolute top-2 left-1 text-xs leading-4 text-white">{k === 10 ? 41 : 42}</b>}
            {l.beat && !l.bar && k < 32 && (
              <span className="absolute top-3 -left-px text-[10px] leading-3 whitespace-nowrap text-[#e8e8e8]">
                {`${40 + Math.floor((k + 6) / 16)} . ${(((k + 6) / 4) % 4) + 1}`}
              </span>
            )}
          </div>
        ))}
      </div>
      <div className="relative min-h-0 flex-1 overflow-hidden">
        {lines.map((l) => (
          <i key={l.x} className={clsx("absolute inset-y-0 w-px", l.bar ? "bg-[#7c7f81]" : l.beat ? "bg-[#55585b]" : "bg-[#34383b]")} style={{ left: l.x }} />
        ))}
        <div className="relative flex flex-col">
          {tracks.map((t, i) => (
            <div key={t.no} className={clsx("flex items-end overflow-hidden", i === 0 && "h-20")}>
              <div className="relative h-[102px] w-full shrink-0 border-b border-[#3f4346]">
                {t.clips.map((c) => (
                  <ClipBox key={c.x} clip={c} tone={t.tone} />
                ))}
              </div>
            </div>
          ))}
        </div>
      </div>
      <div className="flex h-[15px] shrink-0 items-center">
        <div className="ml-[17px] h-px w-[251px] bg-[#a5a7a9]" />
        <div className="h-[3px] w-8 rounded-full bg-[#b5b7b9]" />
        <div className="h-px flex-1 bg-[#a5a7a9]" />
        <span className="ml-2 mr-3.5 flex items-center gap-1 text-xs leading-3 text-[#c0c2c4]">
          -<span className="flex h-px w-[46px] items-center justify-center bg-[#8b8d90]"><i className="size-1.5 shrink-0 rounded-full bg-[#b5b7b9]" /></span>+
        </span>
      </div>
      <div className="pointer-events-none absolute top-1 bottom-[15px] left-[1587px] w-1 border-x border-white bg-[#111]" />
    </section>
  );
}

function ProjectWindow() {
  return (
    <main className="ml-1 mr-1 flex min-w-0 flex-1 overflow-hidden rounded-lg border-2 border-white bg-[#25292c]">
      <section className="flex w-[426px] shrink-0 flex-col border-r border-[#5d5f62] pl-[3px]" aria-label="Spurliste">
        <div className="flex h-[29px] shrink-0 items-start border-b border-[#5d5f62] pt-1 pr-1.5 text-white">
          <div className="flex h-5 w-[50px] rounded-[2px] border border-[#77797c] bg-[#5c5d61]">
            <button aria-label="Spur hinzufügen" className={cell}><Icon name="plus" className="size-3" /></button>
            <button aria-label="Track-Preset" className={cell}><Icon name="preset" /></button>
          </div>
          <div className="ml-auto flex h-5 divide-x divide-[#77797c] rounded-[2px] border border-[#77797c] bg-[#1c1d21] text-[10px]">
            <span className="w-[62px] pl-[3px] leading-[18px]">60 / 60</span>
            <button aria-label="Sichtbarkeit" className="grid w-[25px] place-items-center"><Icon name="agents" className="size-3.5" /></button>
            <button aria-label="Spurtypen" className="grid w-[25px] place-items-center"><Icon name="list" className="size-3.5" /></button>
          </div>
          <button aria-label="Spuren suchen" className="ml-1.5 grid h-5 w-[25px] place-items-center rounded-[2px] border border-[#77797c] bg-[#5c5d61]">
            <Icon name="find" className="size-3.5" />
          </button>
        </div>
        <div className="flex min-h-0 flex-1 flex-col overflow-hidden pl-px">
          {tracks.map((t, i) => (
            <div key={t.no} className={clsx("flex shrink-0 items-end overflow-hidden", i === 0 && "h-20")}>
              <TrackHead t={t} cut={i === 0} />
            </div>
          ))}
        </div>
        <div className="flex h-[18px] shrink-0 items-center gap-2.5 pr-1 pl-2 text-xs text-[#85878a]">
          <span className="flex-1 text-white">-</span>
          <Icon name="down" className="h-2 w-2.5" />
          <Icon name="gear" className="size-3.5" />
        </div>
      </section>
      <Timeline />
      <div className="flex w-[19px] shrink-0 flex-col items-center pt-[5px] pr-1 text-[#b5b7b9]">
        <button aria-label="Lineal-Format" className="grid h-[19px] w-4 place-items-center rounded-[2px] border border-[#77797c] bg-[#5c5d61] text-white">
          <Icon name="down" className="size-2" />
        </button>
        <Icon name="line" className="mt-2 size-2.5" />
        <i className="mt-2 h-11 w-px bg-[#9b9d9f]" />
        <i className="size-1.5 rounded-full bg-[#b5b7b9]" />
        <i className="mt-5 h-[254px] w-px bg-[#9b9d9f]" />
        <i className="h-[188px] w-1 rounded-full bg-[#c4c4c4]" />
        <i className="w-px flex-1 bg-[#9b9d9f]" />
        <Icon name="down" className="mt-1 size-1.5" />
        <i className="mt-2 h-3 w-px bg-[#9b9d9f]" />
        <i className="size-1.5 rounded-full bg-[#b5b7b9]" />
        <i className="h-8 w-px bg-[#9b9d9f]" />
        <span className="mt-1 mb-5 text-[10px] leading-3">+</span>
      </div>
    </main>
  );
}

const field = "min-w-0 flex-1 bg-transparent pr-1.5 text-right text-sm whitespace-pre outline-none";

function Locator({ icon, label, value }: { icon: string; label: string; value: string }) {
  return (
    <div className={clsx(box, dark, "w-[151px]")}>
      <button aria-label={`Zu ${label}`} className={clsx("grid w-6 place-items-center border-r border-[#77797c]", grey)}>
        <Icon name={icon} className="size-3.5" />
      </button>
      <input aria-label={label} defaultValue={value} className={field} />
    </div>
  );
}

function Transport() {
  return (
    <div className="absolute right-[113px] bottom-[43px] left-[722px] flex h-[52px] bg-[#050505] py-[3px] text-white" role="toolbar" aria-label="Transportfeld">
      <button aria-label="Links schließen" className="w-[19px] self-start text-[11px] leading-3 font-bold">X</button>
      <div className="flex min-w-0 flex-1 items-center gap-1 rounded-lg border-2 border-[#66686b] bg-[#25292c] px-[3px]">
        <div className={clsx(box, dark, "w-[251px] divide-x divide-[#77797c]")}>
          <div className="flex w-[125px] items-center pl-1">
            <Icon name="dot" className="size-4" />
            <Drop label="Aufnahmemodus" value="Punch-In/Ou." />
          </div>
          <Drop label="Startmodus" value="Start am Positio." />
        </div>
        <Grip />
        <button className={clsx(box, grey, "w-[38px] items-center justify-center font-[Lato] text-sm")}>AQ</button>
        <Locator icon="locL" label="Linker Locator" value="81.  1.  1.    0" />
        <Locator icon="locR" label="Rechter Locator" value="97.  1.  1.    0" />
        <div className={clsx(box, grey, "w-[76px]")}>
          <Tool name="lock" on />
          <Tool name="punchIn" />
          <Tool name="punchOut" />
        </div>
        <Grip />
        <div className="flex h-8 w-[352px] shrink-0 rounded-[3px] border-2 border-[#c3c5c7] bg-[#737578]">
          {["toStart", "toEnd", "rewind", "forward", "cycle", "stop", "play", "rec"].map((n, i) => (
            <button key={n} aria-label={n} className={clsx("grid place-items-center", i < 4 ? "w-[38px]" : "flex-1", n === "stop" && "bg-[#e6edf8] text-black")}>
              <Icon name={n} />
            </button>
          ))}
        </div>
        <Grip />
        <div className={clsx(box, dark, "w-[150px]")}>
          <button aria-label="Zeitformat" className="grid w-6 place-items-center border-r border-[#55585b]"><Icon name="note" className="size-3.5" /></button>
          <input aria-label="Position" defaultValue="42.  1.  1.  55" className={field} />
        </div>
        <Grip />
        <div className={clsx(box, dark, "w-[107px] items-center")}>
          <button aria-label="Tempospur" className={clsx("grid h-full w-6 place-items-center", lit)}><Icon name="tempo" /></button>
          <input aria-label="Tempo" defaultValue="110.000" className="min-w-0 flex-1 bg-transparent pr-2 text-right text-xs outline-none" />
          <svg viewBox="0 0 8 16" className="mr-1.5 h-4 w-2"><path d="M4 0l4 6H0ZM4 16l4-6H0Z" fill="#f0f0f0" /></svg>
        </div>
        <Grip />
        <div className={clsx(box, dark, "w-[150px]")}>
          <div className={clsx("flex w-[50px]", lit)}>
            <Tool name="metro" />
            <Tool name="precount" />
          </div>
          <svg viewBox="0 0 74 23" className="flex-1"><path d="M4 4h8v3H4ZM21 17h8v3h-8Zm17 0h8v3h-8Zm17 0h8v3h-8Z" fill="#fff" /></svg>
          <button aria-label="Metronom einrichten" className={clsx("grid w-6 place-items-center", grey)}><Icon name="e" /></button>
        </div>
        <Grip />
        <div className={clsx(box, dark, "w-[142px] divide-x divide-[#3f4346]")}>
          <span className="w-[26px]" />
          <span className="flex-1" />
          <span className="flex w-[52px] items-center justify-end gap-2 pr-1 text-xs">
            0.00 <Icon name="right" className="mb-2 size-2 rotate-180" />
          </span>
        </div>
        <Grip />
        <button aria-label="Transport einrichten" className={clsx(box, dark, "w-[19px] items-center justify-center")}><Icon name="gear" className="size-3.5" /></button>
      </div>
      <button aria-label="Transportfeld schließen" className="w-[17px] self-start pt-0.5 text-[11px] leading-3 font-bold">X</button>
    </div>
  );
}

function StatusBar() {
  return (
    <div className="flex h-10 shrink-0 items-center gap-[5px] bg-[#25292c] pl-[5px] pr-1">
      <div className={clsx(box, grey, "w-6")}><Tool name="clock" /></div>
      {["dot", "wave", "midi"].map((n) => (
        <div key={n} className="flex items-center gap-[3px]">
          <div className={clsx(box, dark, "w-11")}>
            <Tool name={n} />
            <button aria-label={`${n} Menü`} className="grid w-5 place-items-center"><Down /></button>
          </div>
          <Grip />
        </div>
      ))}
      <button className={clsx(box, grey, "w-[38px] items-center justify-center font-[Lato] text-sm")}>AQ</button>
      <div className="ml-[395px] flex flex-1 flex-col">
        <div className="flex h-[13px] border border-[#77797c] p-[2px]"><i className="h-full w-10 bg-[#cdd2da]" /><i className="ml-7 w-px bg-[#45484b]" /></div>
        <div className="flex h-[13px] border border-t-0 border-[#77797c] p-[2px]"><i className="h-full w-px bg-white" /><i className="ml-8 w-px bg-[#45484b]" /></div>
      </div>
      <div className={clsx(box, dark, "w-[120px] pl-[62px]")}><i className="border-l border-[#45484b]" /></div>
      <Grip />
      <div className={clsx(box, dark, "w-[19px]")}><Tool name="gear" /></div>
    </div>
  );
}

const apps: { name: string; open?: boolean; active?: boolean; art: ReactNode }[] = [
  { name: "Cortana", art: <svg viewBox="0 0 24 24" className="size-6"><circle cx="12" cy="12" r="6.500" fill="none" stroke="#fff" strokeWidth="2" /></svg> },
  { name: "Taskansicht", art: <svg viewBox="0 0 24 24" className="size-6"><path d="M5 5v2h9V5M5 19v-2h9v2M5 9.500h9v5H5ZM18 5v3M18 11v8M17 8.500h2v2h-2Z" fill="none" stroke="#fff" strokeWidth="1.300" /></svg> },
  {
    name: "Edge",
    art: (
      <svg viewBox="0 0 24 24" className="size-6">
        <defs>
          <linearGradient id="edgeTop" x1="0" x2="1"><stop stopColor="#1da1e8" /><stop offset="1" stopColor="#5bdc6a" /></linearGradient>
          <linearGradient id="edgeLow" x1="0" y1="0" x2="1" y2="1"><stop stopColor="#2a9ae8" /><stop offset="1" stopColor="#0c4fa0" /></linearGradient>
        </defs>
        <circle cx="12" cy="12" r="11" fill="url(#edgeLow)" />
        <path d="M1 11C2 4 7 1 12 1c7 0 11 5 11 10 0 4-3 6-6 6-2 0-4-1-3-3 1-3-1-6-5-6-4 0-7 1-8 3Z" fill="url(#edgeTop)" />
        <path d="M9 10c-2 5 1 10 7 11 3 0 5-2 6-4-5 2-11 1-11-5Z" fill="#123f86" />
      </svg>
    ),
  },
  {
    name: "Store",
    art: (
      <svg viewBox="0 0 24 24" className="size-6">
        <path d="M7 6V2h10v4" fill="none" stroke="#2ea7ea" strokeWidth="1.800" />
        <rect x="1" y="5" width="22" height="18" rx="2.500" fill="#f3f3f3" />
        <path d="M7 9h4.500v4.500H7Z" fill="#f25022" /><path d="M12.500 9H17v4.500h-4.500Z" fill="#7fba00" />
        <path d="M7 14.500h4.500V19H7Z" fill="#00a4ef" /><path d="M12.500 14.500H17V19h-4.500Z" fill="#ffb900" />
      </svg>
    ),
  },
  {
    name: "Mail",
    art: (
      <svg viewBox="0 0 32 24" className="h-6 w-8">
        <path d="M0 8 12 0l12 8v14H0Z" fill="#0d5aa7" /><path d="M2 8h20v8H2Z" fill="#f4f4f4" /><path d="M0 8l12 8 12-8v14H0Z" fill="#35a8ee" />
        <circle cx="24" cy="17" r="6.500" fill="#2c3134" stroke="#9a9d9f" /><text x="24" y="21" textAnchor="middle" fontSize="11" fill="#fff">1</text>
      </svg>
    ),
  },
  { name: "Office", art: <svg viewBox="0 0 24 24" className="size-6"><path d="M15 1 4 5v14l4-2V7l7-2v15l-9 1 9 2 6-2V3Z" fill="#e2401b" /><path d="M4 5l4 2v10l-4 2Z" fill="#b81f3c" /></svg> },
  { name: "X", art: <svg viewBox="0 0 24 24" className="size-6"><circle cx="12" cy="12" r="10.500" fill="#f5f5f5" /><path d="M6 7c5 2 5 8 0 10M10 7c5 2 5 8 0 10M18 7c-5 2-5 8 0 10M14 7c-4 2-4 8 0 10" fill="none" stroke="#222" strokeWidth="1.300" /></svg> },
  {
    name: "Firefox", open: true,
    art: (
      <svg viewBox="0 0 24 24" className="size-6">
        <defs><linearGradient id="fox" x1="0.800" y1="0" x2="0.200" y2="1"><stop stopColor="#ffe14a" /><stop offset="0.500" stopColor="#ff8a16" /><stop offset="1" stopColor="#f02a5a" /></linearGradient></defs>
        <path d="M14 0c2 3 6 5 8 9 3 8-3 15-10 15S0 19 1 12c0-4 2-6 3-8l2 2c2-1 4-1 6-1 0-2 1-4 2-5Z" fill="url(#fox)" />
        <circle cx="12" cy="13" r="5" fill="#7a3ad8" /><path d="M6 8c3-1 6 0 8 2-3 0-5 1-6 3Z" fill="#ff980e" />
      </svg>
    ),
  },
  { name: "Explorer", art: <svg viewBox="0 0 24 24" className="size-6"><path d="M1 3h8l2 2h12v16H1Z" fill="#e4a21b" /><path d="M1 7h22v14H1Z" fill="#fcd667" /><path d="M5 13h14v9h-4v-4H9v4H5Z" fill="#3b93dc" /></svg> },
  { name: "Spotify", open: true, art: <FaSpotify className="size-[22px] text-[#1ed760]" /> },
  { name: "Ihr Smartphone", art: <svg viewBox="0 0 24 24" className="size-6"><rect x="5" width="14" height="24" rx="1" fill="#33c7f5" /><path d="M5 6h14v6H5Z" fill="#2fb0ee" /><path d="M5 12h14v6H5Z" fill="#1481d6" /><path d="M5 18h14v6H5Z" fill="#0e5798" /></svg> },
  { name: "NZXT CAM", open: true, art: <span className="grid size-6 place-items-center bg-[#4c0c82] text-[8px] font-extrabold text-white">NZXT</span> },
  {
    name: "Discord", open: true,
    art: (
      <span className="relative grid size-6 place-items-center rounded-full bg-[#5865f2]">
        <FaDiscord className="size-4 text-white" />
        <i className="absolute -right-1 -bottom-0.5 size-3.5 rounded-full border-4 border-[#ed5252] bg-white" />
      </span>
    ),
  },
  { name: "Cubase", open: true, active: true, art: <CubaseMark className="size-6" /> },
];

function Taskbar() {
  return (
    <footer className="flex h-10 shrink-0 items-center bg-[linear-gradient(90deg,#1b2429,#2c302c_20%,#34342e_28%,#1d2628_36%,#252825_50%,#25261f_58%,#1b2527_70%,#1e2526)] text-white">
      <button aria-label="Start" className="grid w-12 place-items-center">
        <svg viewBox="0 0 16 16" className="size-4"><path d="M0 2.500 7 1.500v6H0ZM8 1.300 16 0v7.500H8ZM0 8.500h7v6l-7-1ZM8 8.500h8V16l-8-1.300Z" fill="#fff" /></svg>
      </button>
      <label className="flex h-full w-[344px] items-center gap-2.5 border border-[#c8c8c8] bg-[#f2f2f2] pl-3 text-[#222]">
        <svg viewBox="0 0 18 18" className="size-[18px]"><path d="M11 1.500a5.500 5.500 0 100 11 5.500 5.500 0 000-11ZM7 11l-6 6" fill="none" stroke="#222" strokeWidth="1.400" /></svg>
        <input placeholder="Zur Suche Text hier eingeben" aria-label="Suche" className="flex-1 bg-transparent text-sm outline-none placeholder:text-[#333]" />
      </label>
      <nav className="flex h-full items-stretch gap-px">
        {apps.map((a) => (
          <button key={a.name} aria-label={a.name} className={clsx("flex w-12 flex-col items-center", a.active && "bg-[#50585a]")}>
            <span className="flex flex-1 items-center">{a.art}</span>
            <i className={clsx("h-0.5", a.active ? "w-full" : "w-10", a.open ? "bg-[#76b9ed]" : "bg-transparent")} />
          </button>
        ))}
      </nav>
      <div className="ml-auto flex h-full items-center gap-2 text-[13px]">
        <svg viewBox="0 0 24 20" className="h-5 w-6"><path d="M5 19C-1 18 0 10 5 10 5 1 16 0 17 8c7 0 8 10 1 11Z" fill="#a9dcfa" /><path d="M5 19c-4-1-4-6 0-7 5-1 7 4 13 7Z" fill="#e9f6fd" /></svg>
        <span>4°C&nbsp;&nbsp; Bewölkt</span>
        <svg viewBox="0 0 12 8" className="mr-2 ml-3 h-2 w-3"><path d="M1 7l5-5 5 5" fill="none" stroke="#fff" strokeWidth="1.300" /></svg>
        <svg viewBox="0 0 14 18" className="h-[18px] w-3.5"><path d="M2 5h7v8H2ZM9 8l3-2v6l-3-2M3 2c2-1 4-1 6 0M3 16c2 1 4 1 6 0" fill="none" stroke="#fff" strokeWidth="1.200" /></svg>
        <svg viewBox="0 0 14 14" className="size-3.5"><path d="M1 13C1 6 6 1 13 1M4.500 13c0-5 3.500-8.500 8.500-8.500M8 13c0-3 2-5 5-5M11.500 13l1.500-1.500" fill="none" stroke="#c9cbcc" strokeWidth="1.300" /></svg>
        <svg viewBox="0 0 16 14" className="h-3.5 w-4"><path d="M1 5h2l4-4v12L3 9H1ZM9 5c1 1 1 3 0 4M11 3c2 2 2 6 0 8M13 1c3 4 3 8 0 12" fill="none" stroke="#fff" strokeWidth="1.200" /></svg>
        <svg viewBox="0 0 18 20" className="h-5 w-[18px]">
          <path d="M5 2l4 3-4 3-4-3ZM13 2l4 3-4 3-4-3ZM13 8l4 3-4 3-4-3Z" fill="#fff" /><rect y="9" width="11" height="11" rx="1" fill="#c50f1f" />
          <text x="5.500" y="18" textAnchor="middle" fontSize="9" fontWeight="700" fill="#fff">1</text>
        </svg>
        <time className="text-center text-[11px] leading-[18px]">20:45<br />25.02.2022</time>
        <button aria-label="Benachrichtigungen" className="ml-2">
          <svg viewBox="0 0 26 26" className="size-[26px]">
            <path d="M2 3h16v13H9l-3 3v-3H2Z" fill="#fff" /><path d="M5 6.500h10M5 9.500h10M5 12.500h7" stroke="#25292c" />
            <circle cx="18" cy="18" r="7" fill="#45494b" stroke="#a9abac" /><text x="18" y="22" textAnchor="middle" fontSize="11" fill="#fff">8</text>
          </svg>
        </button>
        <i className="mr-1 h-full border-l border-[#5f6567]" />
      </div>
    </footer>
  );
}

export default function App() {
  return (
    <div className="relative flex h-screen w-full flex-col overflow-hidden bg-[#070707] font-['Open_Sans',sans-serif]">
      <MenuBar />
      <Toolbar />
      <div className="flex h-10 shrink-0 items-center justify-center bg-[#18191a] pt-0.5 pl-1 text-[11px] font-semibold text-[#aeb1b3]">Kein Objekt ausgewählt</div>
      <div className="flex min-h-0 flex-1 py-1 pl-1">
        <Inspector />
        <ProjectWindow />
      </div>
      <StatusBar />
      <Transport />
      <Taskbar />
    </div>
  );
}
